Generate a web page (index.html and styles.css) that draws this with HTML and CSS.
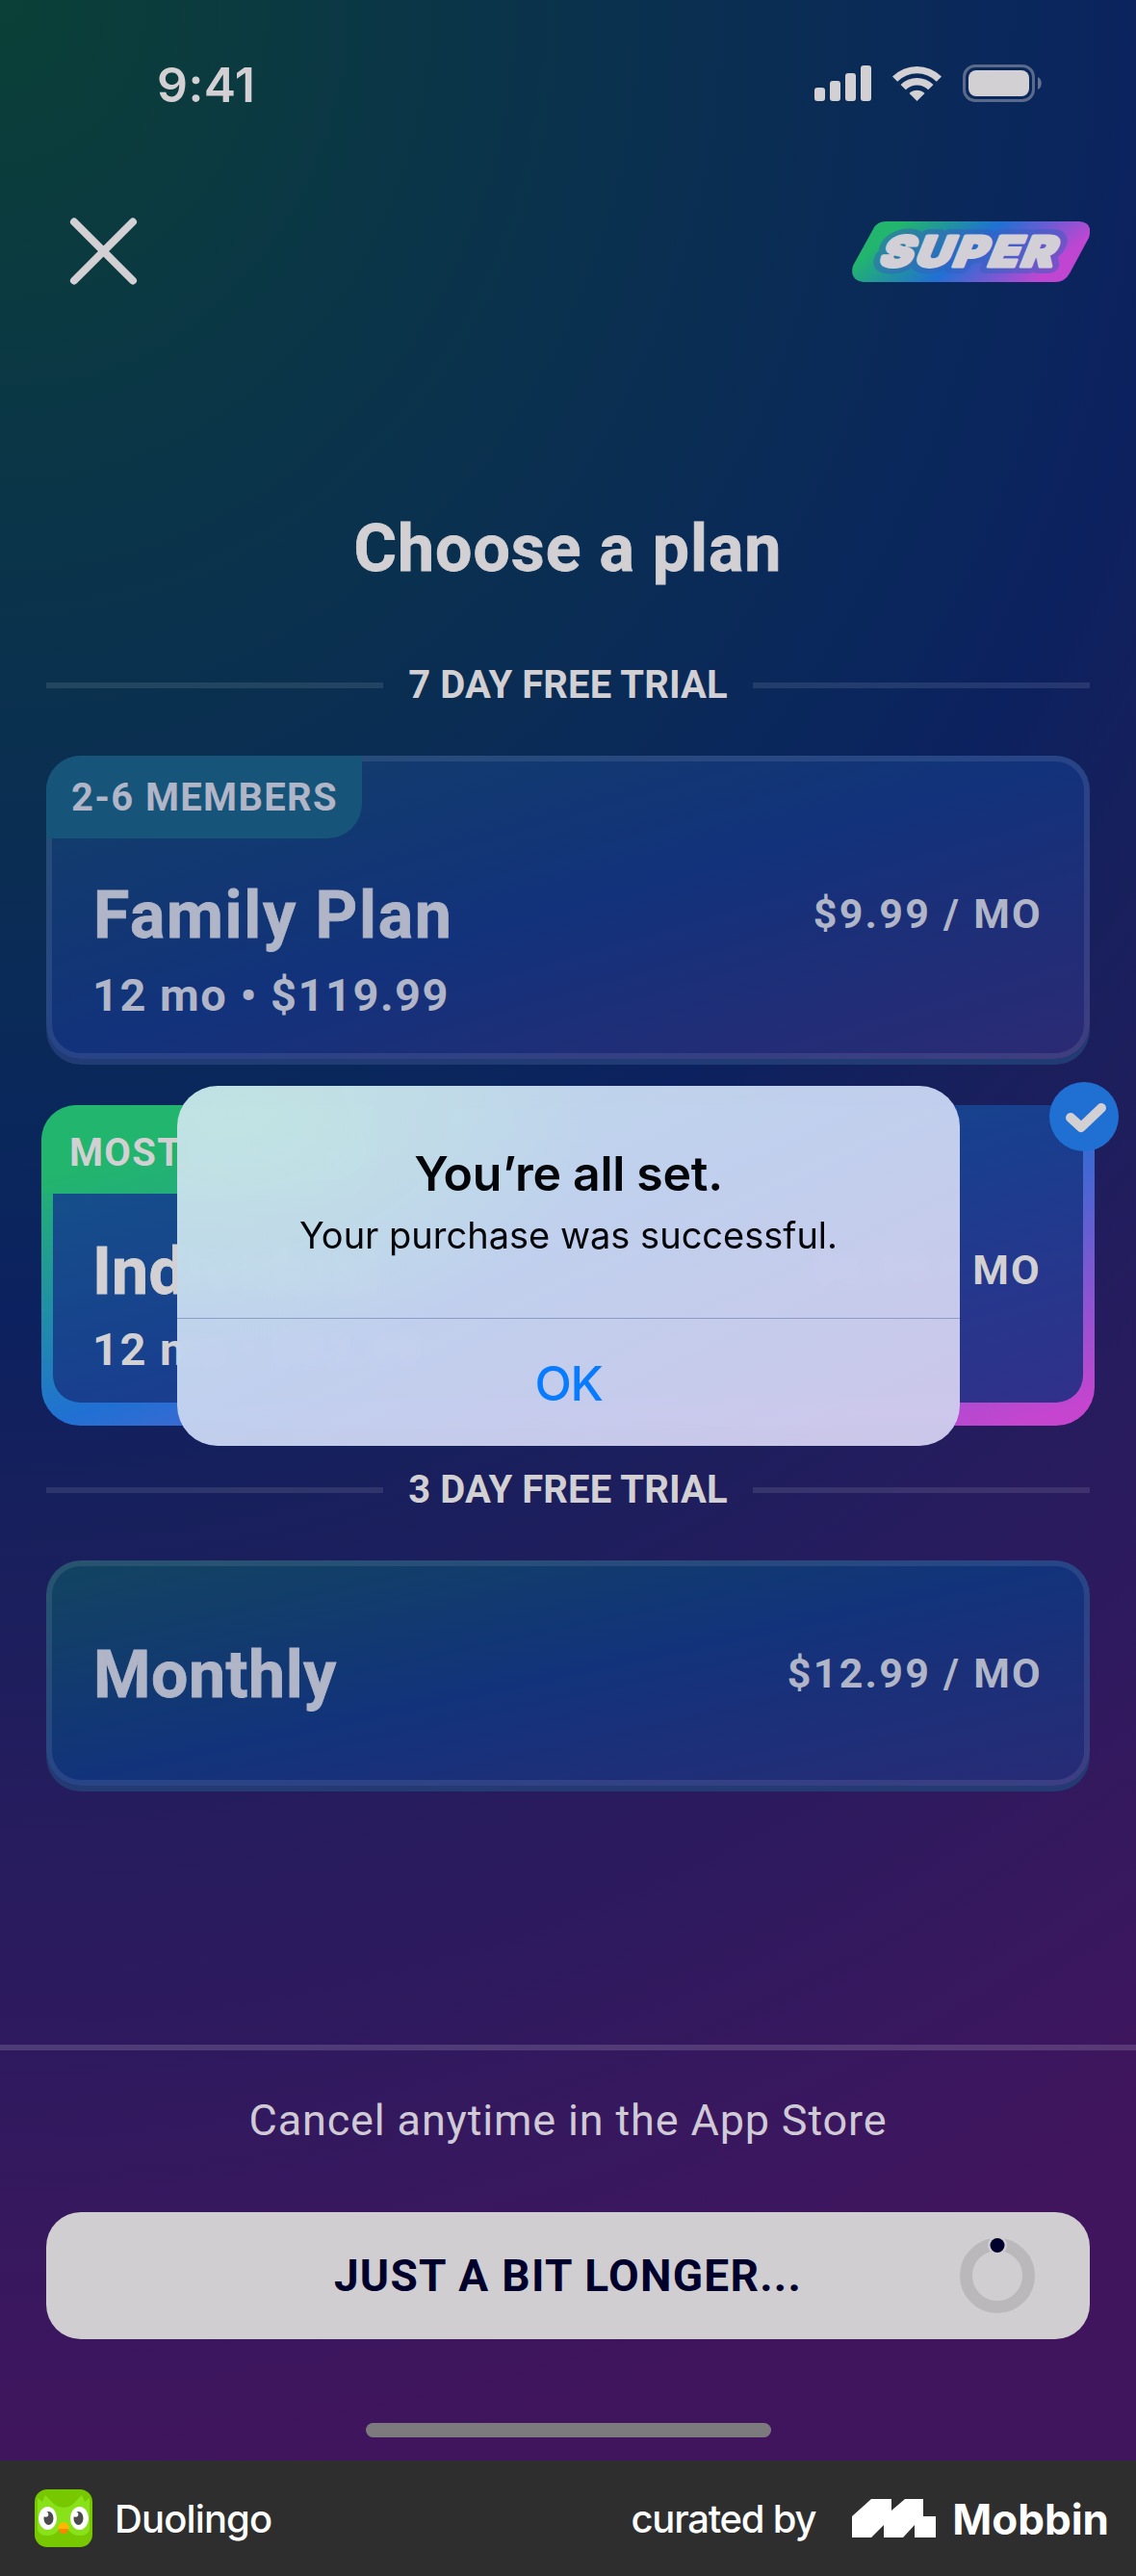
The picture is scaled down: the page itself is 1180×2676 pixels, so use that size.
FILE: index.html
```html
<!DOCTYPE html>
<html lang="en">
<head>
<meta charset="utf-8">
<title>Choose a plan</title>
<link rel="stylesheet" href="styles.css">
</head>
<body>
<main class="screen">
  <div class="status">
    <span class="time">9:41</span>
    <svg class="status-icons" width="238" height="42" viewBox="0 0 238 42">
      <g fill="#d2d0d3">
        <rect x="2" y="24" width="11" height="14" rx="3"/>
        <rect x="18" y="17" width="11" height="21" rx="3"/>
        <rect x="34" y="9" width="11" height="29" rx="3"/>
        <rect x="50" y="1" width="11" height="37" rx="3"/>
        <path d="M83 12.500a36 36 0 0 1 51 0l-5.200 5.200a28.600 28.600 0 0 0-40.600 0z"/>
        <path d="M91.500 21a24 24 0 0 1 34 0l-5.300 5.200a16.600 16.600 0 0 0-23.400 0z"/>
        <path d="M100.500 30a11.500 11.500 0 0 1 16 0l-8 8z"/>
        <rect x="162" y="6" width="63" height="27" rx="8"/>
      </g>
      <rect x="157.500" y="1.500" width="72" height="36" rx="11.500" fill="none" stroke="#d2d0d3" stroke-opacity=".4" stroke-width="3"/>
      <path d="M234 13c5 2 5 11 0 13z" fill="#d2d0d3" fill-opacity=".45"/>
    </svg>
  </div>
  <header class="header">
    <svg width="72" height="70" viewBox="0 0 72 70"><path d="M5 4.500l61 61M66 4.500l-61 61" stroke="#d2d0d3" stroke-width="8" stroke-linecap="round"/></svg>
    <svg width="247" height="63" viewBox="0 0 247 63">
      <defs><linearGradient id="super" x1="0" y1="0.300" x2="1" y2="0.600"><stop offset=".12" stop-color="#22b56d"/><stop offset=".5" stop-color="#2070d3"/><stop offset=".9" stop-color="#c046d2"/></linearGradient></defs>
      <path fill="url(#super)" d="M35 0H236Q251 1 246 17L226 54Q221 63 211 63H12Q-3 61 1 46L22 8Q26 0 35 0Z"/>
      <g font-family="Inter, sans-serif" font-weight="900" font-size="44" letter-spacing="2.500" stroke-linejoin="round" transform="translate(26 47) skewX(-22)">
        <text textLength="184" lengthAdjust="spacingAndGlyphs" fill="#355fc0" stroke="#355fc0" stroke-width="14" opacity=".5">SUPER</text>
        <text textLength="184" lengthAdjust="spacingAndGlyphs" fill="#d2d0d6" stroke="#d2d0d6" stroke-width="3">SUPER</text>
      </g>
    </svg>
  </header>

  <h1 class="title">Choose a plan</h1>

  <div class="trial"><span>7 DAY FREE TRIAL</span></div>

  <section class="card family">
    <div class="tag"><span>2-6 MEMBERS</span></div>
    <div class="row"><h2>Family Plan</h2><span class="price">$9.99 / MO</span></div>
    <p class="terms">12 mo • $119.99</p>
  </section>

  <section class="selected">
    <div class="selected-inner">
      <div class="tag popular"><span>MOST POPULAR</span></div>
      <div class="row"><h2>Individual</h2><span class="price">$6.99 / MO</span></div>
      <p class="terms">12 mo • $83.99</p>
    </div>
    <svg class="check" width="72" height="72" viewBox="0 0 72 72"><circle cx="36" cy="36" r="36" fill="#2070d3"/><path d="M22 37l11 10 21-20" fill="none" stroke="#d2d0d3" stroke-width="10" stroke-linecap="round" stroke-linejoin="round"/></svg>
  </section>

  <div class="trial second"><span>3 DAY FREE TRIAL</span></div>

  <section class="card monthly">
    <div class="row"><h2>Monthly</h2><span class="price">$12.99 / MO</span></div>
  </section>

  <footer class="actions">
    <p class="cancel">Cancel anytime in the App Store</p>
    <div class="button">
      <span class="label">JUST A BIT LONGER...</span>
      <svg class="spinner" width="78" height="78" viewBox="0 0 78 78"><circle cx="39" cy="39" r="32.500" fill="none" stroke="#bab8bb" stroke-width="13"/><circle cx="39" cy="7.500" r="10" fill="#d0ced1"/><circle cx="39" cy="7.500" r="7.500" fill="#00002d"/></svg>
    </div>
    <div class="home"></div>
  </footer>

  <div class="alert">
    <div class="message">
      <strong>You’re all set.</strong>
      <p>Your purchase was successful.</p>
    </div>
    <div class="ok">OK</div>
  </div>
</main>

<div class="credit">
  <svg width="60" height="60" viewBox="0 0 60 60">
    <rect width="60" height="60" rx="13" fill="#78c800"/>
    <path d="M3 9l5 4 3-7 10 10q10 6 18 0l10-10 3 7 5-4v33q-2 6-10 6-8 0-12-6h-10q-4 6-12 6-8 0-10-6z" fill="#89e219"/>
    <ellipse cx="13.500" cy="30" rx="9.500" ry="12" fill="#fff"/><ellipse cx="46.500" cy="30" rx="9.500" ry="12" fill="#fff"/>
    <ellipse cx="14.500" cy="30" rx="5" ry="7" fill="#4b4b4b"/><ellipse cx="45.500" cy="30" rx="5" ry="7" fill="#4b4b4b"/>
    <circle cx="11.500" cy="26" r="2.800" fill="#fff"/><circle cx="42.500" cy="26" r="2.800" fill="#fff"/>
    <path d="M25 41h10q-1 5-5 5t-5-5z" fill="#ff8400"/><path d="M24 39q3-5 6-5t6 5q0 2-2 2h-8q-2 0-2-2z" fill="#ffb800"/>
  </svg>
  <span class="app">Duolingo</span>
  <span class="curated">curated by</span>
  <svg class="mark" width="87" height="40" viewBox="0 0 87 40"><path fill="#fff" d="M0 18L20 0H41V12L55 0H74V18H87V40H65V27L53 40H33V27L20 40H0Z"/></svg>
  <span class="mobbin">Mobbin</span>
</div>
</body>
</html>
```
FILE: styles.css
```css
* { box-sizing: border-box; margin: 0; padding: 0; }
body { width: 1180px; background: #2e2e2e; font-family: Roboto, "Liberation Sans", sans-serif; color: #d2d0d3; }
svg { display: block; flex: none; }

.screen {
  position: relative; height: 2556px; display: flex; flex-direction: column; overflow: hidden;
  background: radial-gradient(2322px 2580px at 0 0, #0a4037 0%, #0b3b3e 9%, #0a3548 20%, #0a2e52 33%, #0a275c 46%, #0c215f 53%, #17205c 61%, #251c5e 73%, #2d1a5e 81%, #3a175f 93%, #40155d 100%);
}

.status { height: 175px; flex: none; display: flex; align-items: center; justify-content: space-between; padding: 0 98px 0 163px; }
.time { font: 600 50px/60px Inter, sans-serif; letter-spacing: .4px; }
.header { height: 172px; flex: none; display: flex; align-items: center; justify-content: space-between; padding: 0 48px 0 72px; }

.title { margin-top: 183px; font-size: 68px; line-height: 80px; font-weight: 700; letter-spacing: 1px; text-align: center; -webkit-text-stroke: .8px; }

.trial { display: flex; align-items: center; gap: 26px; height: 40px; margin: 82px 48px 0; font-size: 40px; line-height: 40px; font-weight: 700; letter-spacing: .1px; white-space: nowrap; }
.trial::before, .trial::after { content: ""; flex: 1; height: 6px; background: rgba(255, 255, 255, .1); }
.trial.second { margin-top: 47px; }

.card { flex: none; margin: 53px 48px 0; border: 6px solid rgba(255, 255, 255, .09); border-radius: 36px; color: #b0b5c7; background-origin: border-box; }
.family { height: 315px; background-image: linear-gradient(to bottom right, #123f68, #12327b 50%, #2c2a74); box-shadow: 0 6px 0 #213c74; }
.monthly { height: 234px; display: flex; flex-direction: column; justify-content: center; background-image: linear-gradient(to bottom right, #124460, #12337b 50%, #292b76); box-shadow: 0 6px 0 #233a72; }
.tag { width: 328px; height: 86px; margin: -6px 0 0 -6px; padding-left: 26px; display: flex; align-items: center; border-radius: 36px 0 36px 0; background: #175479; font-size: 40px; font-weight: 700; letter-spacing: 1.32px; white-space: nowrap; }
.row { height: 84px; padding: 0 43px; display: flex; align-items: center; justify-content: space-between; }
.tag + .row { margin-top: 36px; }
.row h2 { padding-top: 3px; font-size: 68px; line-height: 84px; font-weight: 700; letter-spacing: 1.7px; -webkit-text-stroke: .8px; }
.monthly h2 { letter-spacing: .5px; }
.price { font-size: 43px; font-weight: 700; letter-spacing: 2.25px; }
.terms { margin-top: 13px; padding-left: 42px; font-size: 47px; line-height: 60px; font-weight: 700; letter-spacing: 1.5px; }

.selected { position: relative; flex: none; height: 333px; margin: 48px 43px 0; padding: 12px; border-radius: 40px; background: linear-gradient(to bottom right, #22b56d 10%, #2070d3 50%, #c545cf 96%); }
.selected-inner { height: 309px; border-radius: 28px; background: linear-gradient(to bottom right, #145488, #183f8e 50%, #31308a); }
.popular { width: 340px; height: 92px; margin: -12px 0 0 -12px; padding: 6px 0 0 29px; background: linear-gradient(to bottom right, #22b56d 40%, #23a884); }
.selected .tag + .row { margin-top: 37px; }
.selected .row { padding: 0 43px 0 41px; }
.selected h2 { letter-spacing: .2px; }
.selected .terms { margin-top: 11px; padding-left: 41px; }
.check { position: absolute; top: -24px; right: -25px; }

.actions { margin-top: auto; height: 432px; border-top: 6px solid rgba(255, 255, 255, .15); padding: 43px 48px 0; }
.cancel { font-size: 45px; line-height: 60px; letter-spacing: .84px; text-align: center; color: #d0c9d6; }
.button { display: grid; grid-template-columns: 1fr auto 1fr; align-items: center; height: 132px; margin-top: 65px; border-radius: 36px; background: #d0ced1; color: #00002d; }
.label { grid-column: 2; font-size: 46px; font-weight: 700; letter-spacing: 1.28px; }
.spinner { justify-self: end; margin-right: 57px; }
.home { width: 421px; height: 15px; margin: 87px auto 0; border-radius: 8px; background: #7d7a7e; }

.alert {
  position: absolute; left: 184px; top: 1128px; width: 813px; height: 374px; border-radius: 42px; color: #05060a; text-align: center; font-family: Inter, sans-serif;
  background: radial-gradient(380px 240px at 60px 30px, rgba(193, 228, 226, .9), rgba(194, 222, 232, 0)), linear-gradient(155deg, rgba(193, 220, 236, .985), rgba(195, 210, 239, .985) 45%, rgba(205, 202, 236, .985) 90%);
  backdrop-filter: blur(6px);
}
.message { height: 242px; padding-top: 61px; border-bottom: 1px solid #8b9cc6; }
.message strong { display: block; font-size: 50px; line-height: 60px; font-weight: 600; letter-spacing: -.28px; }
.message p { font-size: 38px; line-height: 60px; margin-top: 4px; }
.ok { font-size: 50px; line-height: 60px; padding-top: 37px; font-weight: 500; letter-spacing: -1.3px; color: #087bff; }

.credit { height: 120px; display: flex; align-items: center; padding: 2px 28px 0 36px; color: #fff; font-family: Inter, sans-serif; font-size: 40px; line-height: 60px; font-weight: 500; }
.credit svg { margin-top: -2px; }
.app { margin-left: 23px; letter-spacing: -.87px; }
.curated { margin-left: auto; letter-spacing: -1.25px; }
.credit .mark { margin-left: 38px; }
.mobbin { margin-left: 17px; font-size: 44px; font-weight: 700; }
```
